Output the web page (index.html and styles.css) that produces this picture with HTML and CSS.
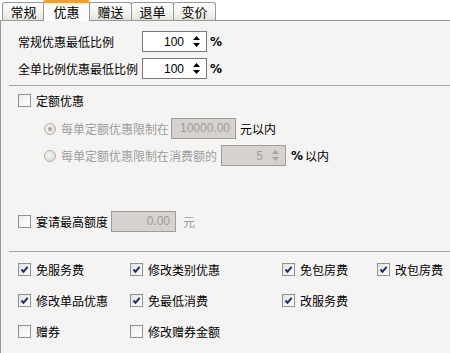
FILE: index.html
```html
<!DOCTYPE html>
<html lang="zh-CN">
<head>
    <meta charset="UTF-8">
    <title>优惠设置</title>
    <link rel="stylesheet" href="styles.css">
</head>
<body>
    <div class="tabs">
        <div class="tab">常规</div>
        <div class="tab active">优惠</div>
        <div class="tab">赠送</div>
        <div class="tab">退单</div>
        <div class="tab">变价</div>
    </div>

    <div class="pane">
        <!-- minimum discount ratios -->
        <div class="limits">
            <span>常规优惠最低比例</span>
            <div class="spin">
                <span class="spin-value">100</span>
                <svg class="arrows" width="7" height="11" viewBox="0 0 7 11"><path d="M3.5 0 L7 4 L0 4 Z M0 7 L7 7 L3.5 11 Z" fill="#000"/></svg>
            </div>
            <span class="pct">%</span>

            <span>全单比例优惠最低比例</span>
            <div class="spin">
                <span class="spin-value">100</span>
                <svg class="arrows" width="7" height="11" viewBox="0 0 7 11"><path d="M3.5 0 L7 4 L0 4 Z M0 7 L7 7 L3.5 11 Z" fill="#000"/></svg>
            </div>
            <span class="pct">%</span>
        </div>

        <div class="sep"></div>

        <!-- fixed amount discount -->
        <label class="check-row fixed">
            <span class="box"></span>定额优惠
        </label>

        <div class="radios">
            <div class="radio-row">
                <span class="radio on"></span>
                <span class="muted">每单定额优惠限制在</span>
                <div class="text-box disabled">10000.00</div>
                <span>元以内</span>
            </div>
            <div class="radio-row second">
                <span class="radio"></span>
                <span class="muted">每单定额优惠限制在消费额的</span>
                <div class="spin disabled">
                    <span class="spin-value">5</span>
                    <svg class="arrows" width="7" height="11" viewBox="0 0 7 11"><path d="M3.5 0 L7 4 L0 4 Z M0 7 L7 7 L3.5 11 Z" fill="#a8a6a0"/></svg>
                </div>
                <span class="pct">%</span><span class="after-pct">以内</span>
            </div>
        </div>

        <div class="check-row banquet">
            <span class="box"></span>
            <span>宴请最高额度</span>
            <div class="text-box disabled small">0.00</div>
            <span class="muted">元</span>
        </div>

        <div class="sep second-sep"></div>

        <!-- permissions -->
        <div class="perms">
            <label class="check-row"><span class="box checked"></span>免服务费</label>
            <label class="check-row"><span class="box checked"></span>修改类别优惠</label>
            <label class="check-row"><span class="box checked"></span>免包房费</label>
            <label class="check-row"><span class="box checked"></span>改包房费</label>

            <label class="check-row"><span class="box checked"></span>修改单品优惠</label>
            <label class="check-row"><span class="box checked"></span>免最低消费</label>
            <label class="check-row"><span class="box checked"></span>改服务费</label>
            <span></span>

            <label class="check-row"><span class="box"></span>赠券</label>
            <label class="check-row"><span class="box"></span>修改赠券金额</label>
        </div>
    </div>
</body>
</html>
```

FILE: styles.css
```css
/* Page base */
body {
    margin: 0;
    background-color: #fff;
    font-family: "Noto Sans CJK SC", "Liberation Sans", sans-serif;
    font-size: 12px;
    color: #000;
    height: 353px;
    overflow: hidden;
}

/* Tab strip */
.tabs {
    display: flex;
    align-items: flex-end;
    height: 20px;
    padding-left: 2px;
    position: relative;
    z-index: 1;
}

.tab {
    box-sizing: border-box;
    width: 43px;
    height: 18px;
    margin-right: -1px;
    border: 1px solid #919b9c;
    border-bottom: none;
    border-radius: 3px 3px 0 0;
    background: linear-gradient(#ffffff, #f0efea 70%, #e4e2da);
    text-align: center;
    font-size: 13px;
    line-height: 17px;
}

.tab.active {
    width: 47px;
    height: 21px;
    margin: 0 -1px -1px -1px;
    border-top: 3px solid #f0a02c;
    background: #fcfcfe;
    line-height: 18px;
    position: relative;
    z-index: 2;
}

/* Tab pane */
.pane {
    height: 332px;
    border-top: 1px solid #919b9c;
    border-left: 1px solid #919b9c;
    background-color: #f5f4f2;
}

/* Ratio rows */
.limits {
    display: grid;
    grid-template-columns: 121px 65px auto;
    column-gap: 3px;
    row-gap: 6px;
    align-items: center;
    padding: 10px 0 6px 17px;
}

.spin {
    box-sizing: border-box;
    width: 65px;
    height: 21px;
    border: 1px solid #7a7a7a;
    background-color: #fff;
    display: flex;
    align-items: center;
    justify-content: flex-end;
    padding-right: 6px;
    font-family: "Liberation Sans", sans-serif;
}

.spin-value {
    margin-right: 9px;
}

.pct {
    font-family: "DejaVu Sans", sans-serif;
    font-weight: bold;
    font-size: 12px;
}

.sep {
    height: 1px;
    margin-left: 8px;
    background-color: #a3a3a3;
}

/* Checkboxes */
.check-row {
    display: flex;
    align-items: center;
    gap: 5px;
    height: 13px;
}

.box {
    box-sizing: border-box;
    width: 13px;
    height: 13px;
    border: 1px solid #8d9198;
    background: linear-gradient(135deg, #ececec, #ffffff);
    flex: none;
}

.box.checked {
    background: url("data:image/svg+xml,%3Csvg xmlns='http://www.w3.org/2000/svg' width='11' height='11'%3E%3Cpath d='M2.5 5.5 L4.5 7.8 L8.6 2.8' fill='none' stroke='%23202a60' stroke-width='2'/%3E%3C/svg%3E") no-repeat center, linear-gradient(135deg, #e2e2e2, #ffffff);
}

.fixed {
    margin: 8px 0 0 17px;
}

/* Radio options (disabled) */
.radios {
    padding: 11px 0 0 43px;
}

.radio-row {
    display: flex;
    align-items: center;
    height: 21px;
}

.radio-row.second {
    margin-top: 6px;
}

.radio {
    box-sizing: border-box;
    width: 12px;
    height: 12px;
    border-radius: 50%;
    border: 1px solid #b0b0ac;
    background: radial-gradient(circle at 40% 40%, #f6f6f4, #d8d7d2);
    margin-right: 5px;
    position: relative;
}

.radio.on::after {
    content: "";
    position: absolute;
    left: 3px;
    top: 3px;
    width: 4px;
    height: 4px;
    border-radius: 50%;
    background-color: #a5a5a0;
}

.muted {
    color: #9d9d9d;
}

.text-box {
    box-sizing: border-box;
    width: 65px;
    height: 21px;
    border: 1px solid #9c9c9c;
    text-align: right;
    padding-right: 5px;
    line-height: 19px;
    font-family: "Liberation Sans", sans-serif;
    margin: 0 4px 0 2px;
}

.disabled {
    background-color: #d6d3ce;
    border-color: #9c9c9c;
    color: #9d9d9d;
}

.radio-row .spin {
    margin: 0 5px 0 4px;
}

.after-pct {
    margin-left: 2px;
}

.banquet {
    margin: 49px 0 0 17px;
}

.banquet .text-box {
    margin: 0 2px 0 -2px;
}

.second-sep {
    margin-top: 23px;
}

/* Permission grid */
.perms {
    display: grid;
    grid-template-columns: 112px 152px 95px auto;
    row-gap: 18px;
    padding: 11px 0 0 17px;
}
```
